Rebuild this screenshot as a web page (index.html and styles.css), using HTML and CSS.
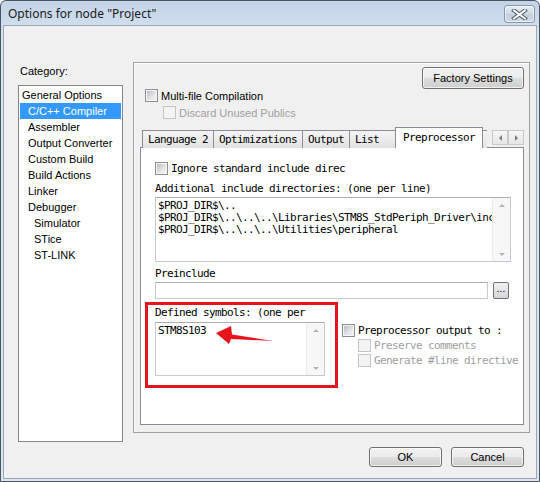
FILE: index.html
```html
<!DOCTYPE html>
<html>
    <head>
        <title>Options for node "Project"</title>
        <link rel="stylesheet" href="styles.css">
    </head>
    <body>
        <div class="window">
            <div class="titlebar">
                <span class="title">Options for node "Project"</span>
                <div class="close-btn">
                    <svg width="17" height="11" viewBox="0 0 17 11">
                        <path d="M3 1.5 L14 9.5 M14 1.5 L3 9.5" stroke="#4e5b6b" stroke-width="4" stroke-linecap="square"/>
                        <path d="M3 1.5 L14 9.5 M14 1.5 L3 9.5" stroke="#ffffff" stroke-width="2" stroke-linecap="square"/>
                    </svg>
                </div>
            </div>
            <div class="client">
                <div class="main">
                    <div class="category">
                        <div class="cat-label">Category:</div>
                        <ul class="listbox">
                            <li>General Options</li>
                            <li class="sub selected">C/C++ Compiler</li>
                            <li class="sub">Assembler</li>
                            <li class="sub">Output Converter</li>
                            <li class="sub">Custom Build</li>
                            <li class="sub">Build Actions</li>
                            <li class="sub">Linker</li>
                            <li class="sub">Debugger</li>
                            <li class="subsub">Simulator</li>
                            <li class="subsub">STice</li>
                            <li class="subsub">ST-LINK</li>
                        </ul>
                    </div>
                    <div class="panel">
                        <div class="panel-top">
                            <div class="btn btn-factory">Factory Settings</div>
                        </div>
                        <div class="check-row">
                            <span class="cb"></span>
                            <span>Multi-file Compilation</span>
                        </div>
                        <div class="check-row indent disabled">
                            <span class="cb"></span>
                            <span>Discard Unused Publics</span>
                        </div>
                        <div class="tabs">
                            <div class="tab">Language 2</div>
                            <div class="tab">Optimizations</div>
                            <div class="tab">Output</div>
                            <div class="tab tab-list">List</div>
                            <div class="tab active">Preprocessor</div>
                            <div class="tab tab-cut"></div>
                            <div class="tab-scroll">
                                <span class="scroll-btn"><span class="tri tri-left"></span></span>
                                <span class="scroll-btn"><span class="tri tri-right"></span></span>
                            </div>
                        </div>
                        <div class="page">
                            <div class="check-row mono">
                                <span class="cb"></span>
                                <span>Ignore standard include direc</span>
                            </div>
                            <div class="field-label label-additional">Additional include directories: (one per line)</div>
                            <div class="textbox box-includes">
                                <div class="lines">$PROJ_DIR$\..
$PROJ_DIR$\..\..\..\Libraries\STM8S_StdPeriph_Driver\inc
$PROJ_DIR$\..\..\..\Utilities\peripheral</div>
                                <div class="vscroll">
                                    <span class="tri tri-up"></span>
                                    <span class="tri tri-down"></span>
                                </div>
                            </div>
                            <div class="field-label label-preinclude">Preinclude</div>
                            <div class="input-row">
                                <div class="input"></div>
                                <div class="browse-btn">...</div>
                            </div>
                            <div class="defines-row">
                                <div class="defines">
                                    <div class="field-label">Defined symbols: (one per</div>
                                    <div class="textbox box-defines">
                                        <div class="lines">STM8S103</div>
                                        <div class="vscroll">
                                            <span class="tri tri-up"></span>
                                            <span class="tri tri-down"></span>
                                        </div>
                                    </div>
                                </div>
                                <div class="pp-output">
                                    <div class="check-row mono">
                                        <span class="cb"></span>
                                        <span>Preprocessor output to :</span>
                                    </div>
                                    <div class="check-row mono indent-sm disabled">
                                        <span class="cb"></span>
                                        <span>Preserve comments</span>
                                    </div>
                                    <div class="check-row mono indent-sm disabled">
                                        <span class="cb"></span>
                                        <span>Generate #line directive</span>
                                    </div>
                                </div>
                            </div>
                        </div>
                    </div>
                </div>
                <div class="footer">
                    <div class="btn btn-dialog">OK</div>
                    <div class="btn btn-dialog">Cancel</div>
                </div>
            </div>
            <!-- red marker round the defines box -->
            <div class="mark"></div>
            <svg class="pointer" width="60" height="24" viewBox="0 0 60 24">
                <polygon points="1,10 16,3 17,11.5 58,18 16,16 14,21" fill="#e8141c"/>
            </svg>
        </div>
    </body>
</html>
```

FILE: styles.css
```css
body {
    margin: 0;
    background-color: #ffffff;
}
.window {
    position: relative;
    width: 540px;
    height: 482px;
    box-sizing: border-box;
    border: 1px solid #4d5560;
    border-radius: 6px 6px 0 0;
    background: linear-gradient(#c3d4e7, #d9e5f2 40px, #dbe6f2);
    display: flex;
    flex-direction: column;
    font-family: "Liberation Sans", Arial, sans-serif;
    font-size: 11px;
    color: #000000;
    overflow: hidden;
}
.titlebar {
    height: 24px;
    display: flex;
    align-items: flex-start;
    padding: 0 4px 0 7px;
}
.title {
    font-family: "Noto Sans", sans-serif;
    font-size: 12px;
    line-height: 26px;
    color: #1b1b1b;
}
.close-btn {
    margin-left: auto;
    margin-top: 4px;
    width: 31px;
    height: 18px;
    box-sizing: border-box;
    border: 1px solid #8795a8;
    border-radius: 3px;
    background: linear-gradient(#e4ebf3, #cfd9e5 50%, #c3cfdd 51%, #d2dce8);
    box-shadow: inset 0 0 0 1px rgba(255, 255, 255, 0.6);
    display: flex;
    align-items: center;
    justify-content: center;
}
.client {
    flex: 1;
    margin: 0 2px 2px 2px;
    border: 1px solid #9aa8b8;
    background-color: #f0f0f0;
    display: flex;
    flex-direction: column;
}
.main {
    display: flex;
    padding-top: 36px;
}
.category {
    margin-left: 14px;
    width: 105px;
    padding-top: 3px;
}
.cat-label {
    height: 13px;
    line-height: 13px;
    padding-left: 2px;
    margin-bottom: 7px;
}
.listbox {
    list-style: none;
    margin: 0;
    padding: 1px;
    height: 357px;
    box-sizing: border-box;
    border: 1px solid #828790;
    background-color: #ffffff;
}
.listbox li {
    height: 16px;
    line-height: 16px;
    padding-left: 2px;
    white-space: nowrap;
}
.listbox .sub {
    padding-left: 8px;
}
.listbox .subsub {
    padding-left: 14px;
}
.listbox .selected {
    background-color: #3399ff;
    color: #ffffff;
}
.panel {
    margin-left: 10px;
    width: 397px;
    height: 371px;
    box-sizing: border-box;
    border: 1px solid #a0a0a0;
    box-shadow: inset 1px 1px 0 #ffffff;
    display: flex;
    flex-direction: column;
}
.panel-top {
    display: flex;
    justify-content: flex-end;
    padding: 4px 5px 0 0;
}
.btn {
    box-sizing: border-box;
    border: 1px solid #707070;
    border-radius: 3px;
    background: linear-gradient(#f2f2f2, #ebebeb 50%, #dddddd 51%, #cfcfcf);
    box-shadow: inset 0 0 0 1px rgba(255, 255, 255, 0.7);
    display: flex;
    align-items: center;
    justify-content: center;
}
.btn-factory {
    width: 102px;
    height: 22px;
}
.check-row {
    display: flex;
    align-items: center;
    height: 13px;
    gap: 3px;
    white-space: nowrap;
}
.panel > .check-row {
    margin-left: 11px;
}
.panel > .check-row.indent {
    margin-left: 29px;
    margin-top: 4px;
}
.cb {
    position: relative;
    flex: none;
    width: 13px;
    height: 13px;
    box-sizing: border-box;
    border: 1px solid #8e8f8f;
    background-color: #f4f4f4;
}
.cb::after {
    content: "";
    position: absolute;
    left: 1px;
    top: 1px;
    right: 1px;
    bottom: 1px;
    background: linear-gradient(135deg, #b9bec4, #e4e5e7 60%, #f3f3f3);
}
.disabled {
    color: #a0a0a0;
}
.disabled .cb {
    border-color: #c5c5c5;
}
.disabled .cb::after {
    background: #f4f4f4;
}
/* NSimSun-like text: 6px per character */
.mono,
.tab,
.field-label,
.lines {
    font-family: "DejaVu Sans Mono", "Liberation Mono", monospace;
    font-size: 11px;
    letter-spacing: -0.62px;
}
.tabs {
    display: flex;
    align-items: flex-end;
    height: 20px;
    margin: 9px 0 0 6px;
    padding-left: 2px;
    width: 382px;
    position: relative;
    z-index: 1;
    margin-bottom: -1px;
}
.tab {
    height: 18px;
    box-sizing: border-box;
    padding: 0 5px;
    border: 1px solid #898c95;
    border-bottom: none;
    margin-right: -1px;
    background: linear-gradient(#f4f4f4, #ececec 50%, #e1e1e1);
    line-height: 17px;
    white-space: nowrap;
}
.tab-list {
    width: 47px;
}
.tab.active {
    height: 21px;
    background: #ffffff;
    padding: 0 7px;
    line-height: 19px;
}
.tab-cut {
    width: 5px;
    padding: 0;
    border-right: none;
    background: linear-gradient(#f4f4f4, #ececec 50%, #e1e1e1);
}
.tab-scroll {
    margin-left: auto;
    display: flex;
    align-self: flex-start;
    margin-top: 2px;
}
.scroll-btn {
    width: 16px;
    height: 15px;
    box-sizing: border-box;
    border: 1px solid #c9c9c9;
    background: linear-gradient(#f6f6f6, #e6e6e6);
    display: flex;
    align-items: center;
    justify-content: center;
}
.tri {
    width: 0;
    height: 0;
    border-style: solid;
}
.tri-left {
    border-width: 3px 3px 3px 0;
    border-color: transparent #7b7b7b transparent transparent;
}
.tri-right {
    border-width: 3px 0 3px 3px;
    border-color: transparent transparent transparent #7b7b7b;
}
.tri-up {
    border-width: 0 3px 3px 3px;
    border-color: transparent transparent #b4b4b4 transparent;
}
.tri-down {
    border-width: 3px 3px 0 3px;
    border-color: #b4b4b4 transparent transparent transparent;
}
.page {
    margin-left: 6px;
    width: 384px;
    height: 278px;
    box-sizing: border-box;
    border: 1px solid #898c95;
    background-color: #ffffff;
    padding: 14px 0 0 14px;
}
.field-label {
    height: 12px;
    line-height: 12px;
    white-space: nowrap;
}
.label-additional {
    margin-top: 8px;
    margin-bottom: 2px;
}
.label-preinclude {
    margin-top: 6px;
    margin-bottom: 2px;
}
.textbox {
    display: flex;
    box-sizing: border-box;
    border: 1px solid #c5c9d0;
    border-top-color: #abadb3;
    background-color: #ffffff;
}
.box-includes {
    width: 356px;
    height: 65px;
}
.box-defines {
    width: 170px;
    height: 54px;
    margin-top: 3px;
}
.lines {
    flex: 1;
    overflow: hidden;
    white-space: pre;
    padding: 2px 0 0 2px;
    line-height: 12px;
}
.vscroll {
    width: 17px;
    background-color: #f7f7f7;
    border-left: 1px solid #ececec;
    display: flex;
    flex-direction: column;
    justify-content: space-between;
    align-items: center;
    padding: 6px 0 5px;
}
.input-row {
    display: flex;
    align-items: center;
}
.input {
    width: 333px;
    height: 17px;
    box-sizing: border-box;
    border: 1px solid #c5c9d0;
    border-top-color: #abadb3;
}
.browse-btn {
    margin-left: 5px;
    width: 16px;
    height: 17px;
    box-sizing: border-box;
    border: 1px solid #707070;
    border-radius: 2px;
    background: linear-gradient(#f2f2f2, #e3e3e3 50%, #d6d6d6);
    font-size: 10px;
    line-height: 12px;
    text-align: center;
}
.defines-row {
    display: flex;
    margin-top: 8px;
}
.pp-output {
    margin-left: 17px;
    padding-top: 17px;
    display: flex;
    flex-direction: column;
    gap: 2px;
}
.pp-output .indent-sm {
    margin-left: 16px;
}
.footer {
    display: flex;
    justify-content: flex-end;
    gap: 9px;
    padding: 5px 12px 0 0;
}
.btn-dialog {
    width: 73px;
    height: 20px;
}
.mark {
    position: absolute;
    left: 144px;
    top: 301px;
    width: 193px;
    height: 86px;
    box-sizing: border-box;
    border: 3px solid #e8141c;
    pointer-events: none;
}
.pointer {
    position: absolute;
    left: 214px;
    top: 322px;
}
```
